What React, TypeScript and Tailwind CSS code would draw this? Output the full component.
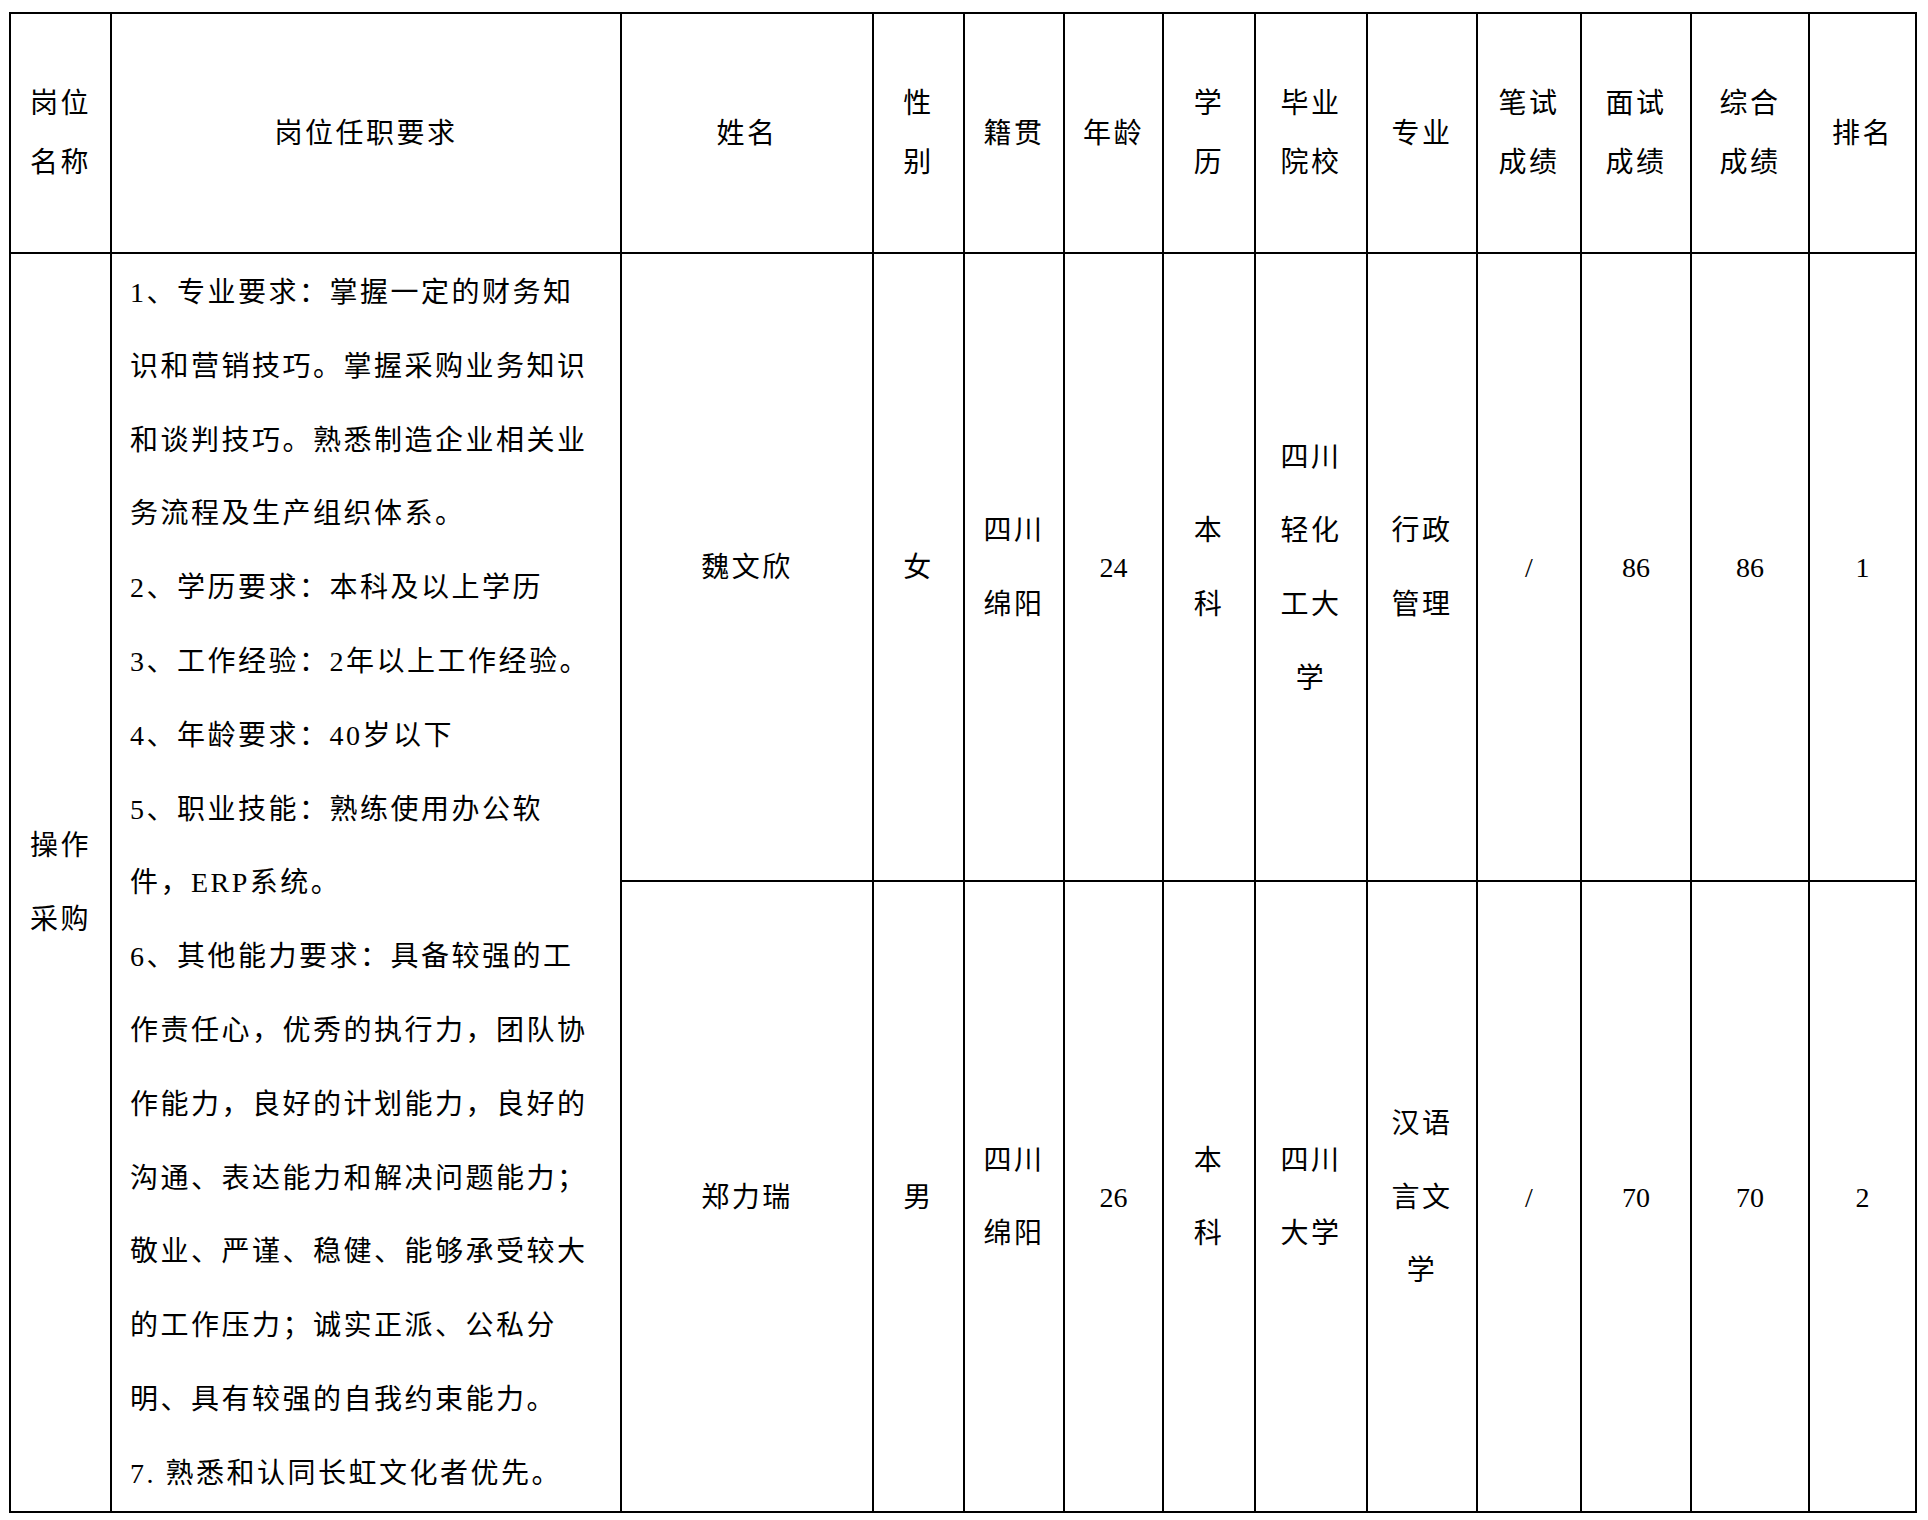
const font = "font-['Liberation_Serif','Noto_Sans_CJK_SC',serif]";

const requirements = [
  "1、专业要求：掌握一定的财务知",
  "识和营销技巧。掌握采购业务知识",
  "和谈判技巧。熟悉制造企业相关业",
  "务流程及生产组织体系。",
  "2、学历要求：本科及以上学历",
  "3、工作经验：2年以上工作经验。",
  "4、年龄要求：40岁以下",
  "5、职业技能：熟练使用办公软",
  "件，ERP系统。",
  "6、其他能力要求：具备较强的工",
  "作责任心，优秀的执行力，团队协",
  "作能力，良好的计划能力，良好的",
  "沟通、表达能力和解决问题能力；",
  "敬业、严谨、稳健、能够承受较大",
  "的工作压力；诚实正派、公私分",
  "明、具有较强的自我约束能力。",
  "7. 熟悉和认同长虹文化者优先。",
];

type Row = {
  name: string;
  sex: string;
  origin: string[];
  age: string;
  edu: string[];
  school: string[];
  major: string[];
  written: string;
  interview: string;
  total: string;
  rank: string;
};

const rows: Row[] = [
  {
    name: "魏文欣",
    sex: "女",
    origin: ["四川", "绵阳"],
    age: "24",
    edu: ["本", "科"],
    school: ["四川", "轻化", "工大", "学"],
    major: ["行政", "管理"],
    written: "/",
    interview: "86",
    total: "86",
    rank: "1",
  },
  {
    name: "郑力瑞",
    sex: "男",
    origin: ["四川", "绵阳"],
    age: "26",
    edu: ["本", "科"],
    school: ["四川", "大学"],
    major: ["汉语", "言文", "学"],
    written: "/",
    interview: "70",
    total: "70",
    rank: "2",
  },
];

function Head({ lines }: { lines: string[] }) {
  return (
    <th className="border-2 border-black p-0 text-center align-middle font-normal leading-[59px]">
      {lines.map((l) => (
        <div key={l}>{l}</div>
      ))}
    </th>
  );
}

function Cell({ lines }: { lines: string[] }) {
  return (
    <td className="border-2 border-black p-0 pt-[2px] text-center align-middle">
      {lines.map((l, i) => (
        <div key={i}>{l}</div>
      ))}
    </td>
  );
}

function Num({ value }: { value: string }) {
  return (
    <td className="border-2 border-black p-0 pt-[2px] text-center align-middle tracking-normal">
      {value}
    </td>
  );
}

export default function App() {
  return (
    <div className={`min-h-[1520px] bg-white pl-[9px] pt-[12px] text-black ${font}`}>
      <table className="w-[1908px] table-fixed border-collapse text-[28px] leading-[73.8px] tracking-[2.5px]">
        <colgroup>
          <col className="w-[101px]" />
          <col className="w-[510px]" />
          <col className="w-[252px]" />
          <col className="w-[91px]" />
          <col className="w-[100px]" />
          <col className="w-[99px]" />
          <col className="w-[92px]" />
          <col className="w-[112px]" />
          <col className="w-[110px]" />
          <col className="w-[104px]" />
          <col className="w-[110px]" />
          <col className="w-[118px]" />
          <col className="w-[107px]" />
        </colgroup>
        <thead>
          <tr className="h-[240px]">
            <Head lines={["岗位", "名称"]} />
            <Head lines={["岗位任职要求"]} />
            <Head lines={["姓名"]} />
            <Head lines={["性", "别"]} />
            <Head lines={["籍贯"]} />
            <Head lines={["年龄"]} />
            <Head lines={["学", "历"]} />
            <Head lines={["毕业", "院校"]} />
            <Head lines={["专业"]} />
            <Head lines={["笔试", "成绩"]} />
            <Head lines={["面试", "成绩"]} />
            <Head lines={["综合", "成绩"]} />
            <Head lines={["排名"]} />
          </tr>
        </thead>
        <tbody>
          {rows.map((r, i) => (
            <tr key={r.name} className={i === 0 ? "h-[628px]" : "h-[630px]"}>
              {i === 0 && (
                <>
                  <td
                    rowSpan={2}
                    className="border-2 border-black p-0 pt-[2px] text-center align-middle"
                  >
                    <div>操作</div>
                    <div>采购</div>
                  </td>
                  <td
                    rowSpan={2}
                    className="border-2 border-black px-[18px] pb-0 pt-[2px] text-left align-top"
                  >
                    {requirements.map((line) => (
                      <div key={line} className="whitespace-nowrap">
                        {line}
                      </div>
                    ))}
                  </td>
                </>
              )}
              <Cell lines={[r.name]} />
              <Cell lines={[r.sex]} />
              <Cell lines={r.origin} />
              <Num value={r.age} />
              <Cell lines={r.edu} />
              <Cell lines={r.school} />
              <Cell lines={r.major} />
              <Num value={r.written} />
              <Num value={r.interview} />
              <Num value={r.total} />
              <Num value={r.rank} />
            </tr>
          ))}
        </tbody>
      </table>
    </div>
  );
}
